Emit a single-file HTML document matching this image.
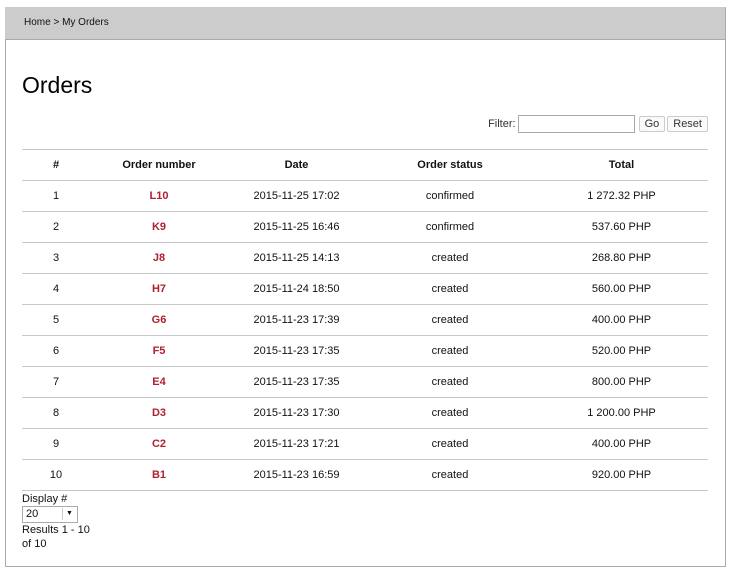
<!DOCTYPE html>
<html><head><style>
body{margin:0;background:#fff;font-family:"Liberation Sans",sans-serif;font-size:11px;color:#111}
.wrap{position:absolute;left:5px;top:7px;width:719px;height:559px;border:1px solid #aaa;border-top:none}
.bar{position:absolute;left:5px;top:7px;width:720px;height:32px;background:#ccc;border-bottom:1px solid #aaa}
.bar span{position:absolute;left:19px;top:10px;font-size:10px}
h1{position:absolute;left:22px;top:72px;margin:0;font-size:23px;font-weight:normal;color:#000}
.filter{position:absolute;top:115px;right:27px;font-size:11px;color:#333}
.filter input{width:111px;height:14px;border:1px solid #aaa;vertical-align:middle;margin:0 2px}
.btn{display:inline-block;border:1px solid #ccc;border-radius:2px;padding:1px 5px;background:#fafafa;margin-left:2px;vertical-align:middle}
table{position:absolute;left:22px;top:149px;width:686px;border-collapse:collapse}
td,th{height:30px;border-top:1px solid #c8c8c8;text-align:center;padding:0;font-size:11px}
th{font-weight:bold}
tr:last-child td{border-bottom:1px solid #c8c8c8}
td.o{color:#b02030;font-weight:bold}
.foot{position:absolute;left:22px;top:492px;font-size:11px;line-height:14px}
.sel{width:54px;height:15px;border:1px solid #aaa;position:relative;margin:0}
.sel span{position:absolute;left:3px;top:0}
.sel i{position:absolute;right:1px;top:1px;width:13px;height:12px;border-left:1px solid #ccc;font-style:normal;font-size:7px;text-align:center;line-height:12px}
</style></head><body>
<div class="wrap"></div>
<div class="bar"><span>Home &gt; My Orders</span></div>
<h1>Orders</h1>
<div class="filter">Filter:<input><span class="btn">Go</span><span class="btn">Reset</span></div>
<table>
<colgroup><col style="width:68px"><col style="width:138px"><col style="width:137px"><col style="width:170px"><col></colgroup>
<tr><th>#</th><th>Order number</th><th>Date</th><th>Order status</th><th>Total</th></tr>
<tr><td>1</td><td class="o">L10</td><td>2015-11-25 17:02</td><td>confirmed</td><td>1 272.32 PHP</td></tr>
<tr><td>2</td><td class="o">K9</td><td>2015-11-25 16:46</td><td>confirmed</td><td>537.60 PHP</td></tr>
<tr><td>3</td><td class="o">J8</td><td>2015-11-25 14:13</td><td>created</td><td>268.80 PHP</td></tr>
<tr><td>4</td><td class="o">H7</td><td>2015-11-24 18:50</td><td>created</td><td>560.00 PHP</td></tr>
<tr><td>5</td><td class="o">G6</td><td>2015-11-23 17:39</td><td>created</td><td>400.00 PHP</td></tr>
<tr><td>6</td><td class="o">F5</td><td>2015-11-23 17:35</td><td>created</td><td>520.00 PHP</td></tr>
<tr><td>7</td><td class="o">E4</td><td>2015-11-23 17:35</td><td>created</td><td>800.00 PHP</td></tr>
<tr><td>8</td><td class="o">D3</td><td>2015-11-23 17:30</td><td>created</td><td>1 200.00 PHP</td></tr>
<tr><td>9</td><td class="o">C2</td><td>2015-11-23 17:21</td><td>created</td><td>400.00 PHP</td></tr>
<tr><td>10</td><td class="o">B1</td><td>2015-11-23 16:59</td><td>created</td><td>920.00 PHP</td></tr>
</table>
<div class="foot">Display #<div class="sel"><span>20</span><i>▼</i></div>Results 1 - 10<br>of 10</div>
</body></html>
